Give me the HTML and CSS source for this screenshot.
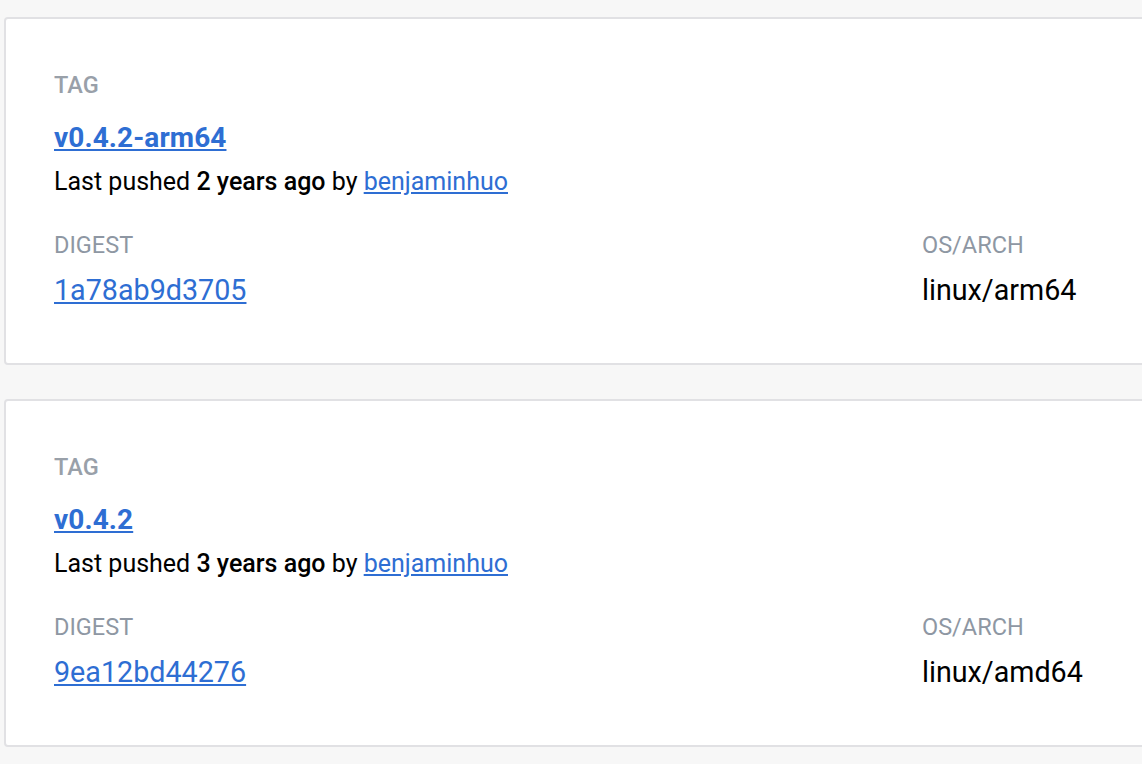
FILE: index.html
```html
<!DOCTYPE html>
<html lang="en">
<head>
<meta charset="utf-8">
<title>Tags</title>
<link rel="stylesheet" href="styles.css">
</head>
<body>
<div class="list">
  <div class="card">
    <div class="label">TAG</div>
    <a class="tag" href="#">v0.4.2-arm64</a>
    <div class="meta">Last pushed <b>2 years ago</b> by <a href="#">benjaminhuo</a></div>
    <div class="grid">
      <div class="label">DIGEST</div>
      <div class="label">OS/ARCH</div>
      <a class="value link" href="#">1a78ab9d3705</a>
      <div class="value">linux/arm64</div>
    </div>
  </div>
  <div class="card">
    <div class="label">TAG</div>
    <a class="tag" href="#">v0.4.2</a>
    <div class="meta">Last pushed <b>3 years ago</b> by <a href="#">benjaminhuo</a></div>
    <div class="grid">
      <div class="label">DIGEST</div>
      <div class="label">OS/ARCH</div>
      <a class="value link" href="#">9ea12bd44276</a>
      <div class="value">linux/amd64</div>
    </div>
  </div>
</div>
</body>
</html>
```

FILE: styles.css
```css
html, body {
  margin: 0;
  padding: 0;
  background: #f7f7f7;
  overflow: hidden;
  font-family: Roboto, "Liberation Sans", sans-serif;
  color: #000;
}
.list {
  display: flex;
  flex-direction: column;
  gap: 34px;
  padding: 17px 0 0 4px;
  width: 1200px;
}
.card {
  background: #fff;
  border: 2px solid #e1e1e4;
  border-radius: 4px;
  padding: 50px 48px 55px 48px;
  display: flex;
  flex-direction: column;
  align-items: flex-start;
}
.label {
  font-size: 23.5px;
  line-height: 32px;
  color: #8e97a3;
  font-weight: 400;
}
.card > .label {
  font-weight: 500;
  color: #99a0a9;
}
.tag {
  font-size: 28px;
  line-height: 36px;
  font-weight: 700;
  letter-spacing: 0.1px;
  color: #2e6ed3;
  margin-top: 19px;
}
.meta {
  font-size: 25px;
  line-height: 32px;
  margin-top: 10px;
}
.meta b {
  font-weight: 500;
}
.meta a {
  color: #2e6ed3;
}
.grid {
  display: grid;
  grid-template-columns: 868px 1fr;
  row-gap: 11px;
  margin-top: 31px;
  width: 100%;
}
.value {
  font-size: 28.7px;
  line-height: 36px;
  color: #000;
}
.link {
  color: #2e6ed3;
  justify-self: start;
}
```
